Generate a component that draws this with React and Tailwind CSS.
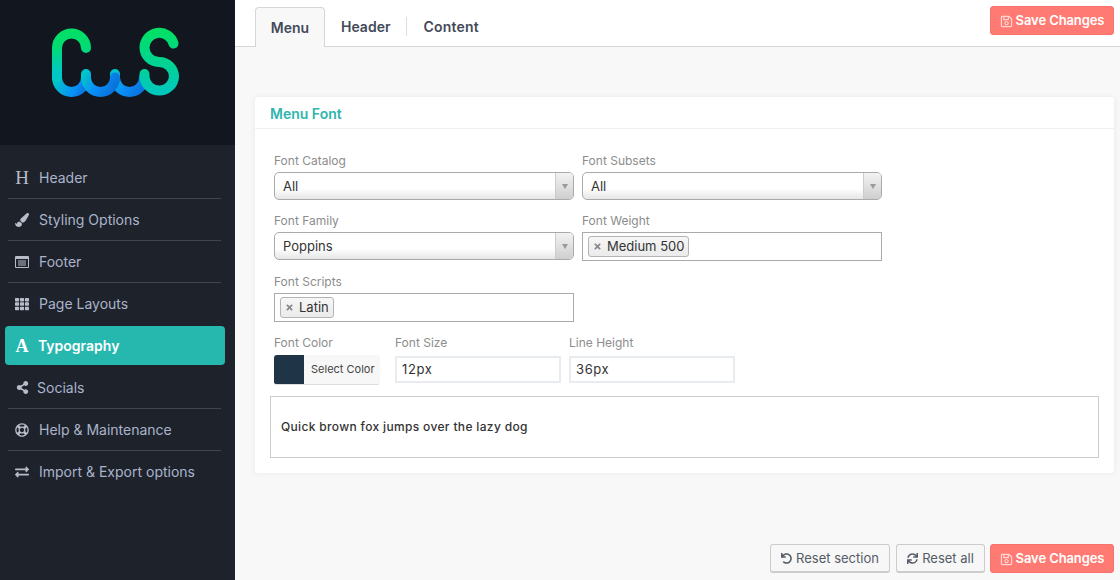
import React from "react";
import { FaPaintBrush, FaTh, FaShareAlt, FaRegLifeRing, FaExchangeAlt, FaRegSave, FaUndo, FaSync, FaTimes } from "react-icons/fa";

const serif = "font-['Liberation_Serif',serif]";

function Logo() {
  return (
    <svg width="150" height="85" viewBox="40 20 150 85" fill="none" strokeWidth="10" strokeLinecap="round">
      <defs>
        <linearGradient id="g1" gradientUnits="userSpaceOnUse" x1="0" y1="32" x2="0" y2="72">
          <stop offset="0" stopColor="#02df67" />
          <stop offset="0.35" stopColor="#02dc70" />
          <stop offset="1" stopColor="#00c8c4" />
        </linearGradient>
        <linearGradient id="g2" gradientUnits="userSpaceOnUse" x1="55" y1="76" x2="84" y2="88">
          <stop offset="0" stopColor="#00c8c4" />
          <stop offset="0.75" stopColor="#0a8ffa" />
          <stop offset="1" stopColor="#0a78e0" />
        </linearGradient>
        <linearGradient id="g3" gradientUnits="userSpaceOnUse" x1="86" y1="72" x2="115" y2="90">
          <stop offset="0" stopColor="#00c4c8" />
          <stop offset="0.45" stopColor="#0a90fa" />
          <stop offset="1" stopColor="#0a70d8" />
        </linearGradient>
        <linearGradient id="g4" gradientUnits="userSpaceOnUse" x1="115" y1="72" x2="144" y2="90">
          <stop offset="0" stopColor="#00c4c8" />
          <stop offset="0.45" stopColor="#0a90fa" />
          <stop offset="1" stopColor="#0a70d8" />
        </linearGradient>
        <linearGradient id="g5" gradientUnits="userSpaceOnUse" x1="0" y1="33" x2="0" y2="92">
          <stop offset="0" stopColor="#02df67" />
          <stop offset="1" stopColor="#00c8bc" />
        </linearGradient>
      </defs>
      <path d="M57 77.500 A14.500 14.500 0 0 0 86 77.500" stroke="url(#g2)" />
      <path d="M86 48 A14.500 14.500 0 0 0 57 48 V77.500" stroke="url(#g1)" />
      <path d="M115 74 V77.500 A14.500 14.500 0 0 0 144 77.500" stroke="url(#g4)" />
      <path d="M86 74 V77.500 A14.500 14.500 0 0 0 115 77.500" stroke="url(#g3)" />
      <path d="M173.500 43.500 A14.800 14.800 0 0 0 144.500 47.500 A14.500 14.500 0 0 0 159 62 A14.800 14.800 0 0 1 174 77 A14.800 14.800 0 0 1 144.500 77 V74" stroke="url(#g5)" />
    </svg>
  );
}

function FooterIcon() {
  return (
    <svg width="14" height="12" viewBox="0 0 14 12">
      <path fillRule="evenodd" fill="currentColor" d="M1 0h12a1 1 0 0 1 1 1v10a1 1 0 0 1-1 1H1a1 1 0 0 1-1-1V1a1 1 0 0 1 1-1zM1 3v8h12V3zM3 4.500h8v1H3zM3 6.500h8v1H3zM3 8.500h8v1H3z" />
    </svg>
  );
}

function NavItem({ icon, label, gap = "ml-[10px]", last }) {
  return (
    <div className={`ml-[8px] w-[213px] h-[42px] flex items-center border-b text-[14px] text-[#aab4cb] ${last ? "border-transparent" : "border-[#45444a]"}`}>
      <span className="w-[14px] ml-[7px] flex justify-center text-[#b6bcc8]">{icon}</span>
      <span className={gap}>{label}</span>
    </div>
  );
}

function Sidebar() {
  return (
    <aside className="w-[235px] shrink-0 bg-[#1e222b] flex flex-col">
      <div className="h-[145px] bg-[#12161e] flex items-start pt-[20px] pl-[40px]">
        <Logo />
      </div>
      <nav className="pt-[12px] flex flex-col">
        <NavItem icon={<span className={`${serif} text-[19px] leading-none`}>H</span>} label="Header" />
        <NavItem icon={<FaPaintBrush size={14} />} label="Styling Options" />
        <NavItem icon={<FooterIcon />} label="Footer" />
        <NavItem icon={<FaTh size={14} />} label="Page Layouts" last />
        <div className="ml-[5px] w-[220px] mt-[1px] mb-[2px] h-[39px] rounded-[4px] bg-[#26b7af] flex items-center text-[14px] font-semibold text-white">
          <span className={`${serif} w-[14px] ml-[10px] flex justify-center text-[18px] leading-none font-bold`}>A</span>
          <span className="ml-[9px]">Typography</span>
        </div>
        <NavItem icon={<FaShareAlt size={13} />} label="Socials" gap="ml-[8px]" />
        <NavItem icon={<FaRegLifeRing size={14} />} label="Help & Maintenance" />
        <NavItem icon={<FaExchangeAlt size={14} />} label="Import & Export options" last />
      </nav>
    </aside>
  );
}

function SaveButton() {
  return (
    <button className="w-[124px] h-[29px] pt-[1px] rounded-[3px] bg-[#ff7a72] border border-[#f9716a] flex items-center justify-center text-[13px] font-semibold tracking-[-0.1px] text-white">
      <FaRegSave size={13} className="mr-[3px] text-[#ffd5d2]" />
      Save Changes
    </button>
  );
}

function Label({ children, className = "" }) {
  return <div className={`text-[12px] leading-[14px] text-[#8d8d8d] ${className}`}>{children}</div>;
}

function Select({ value }) {
  return (
    <div className="mt-[4px] w-[300px] h-[28px] rounded-[5px] border border-[#aaaaaa] bg-[linear-gradient(#ffffff_60%,#e6e6e6)] flex overflow-hidden">
      <div className="flex-1 flex items-center pl-[8px] pt-[1px] text-[13px] text-[#333333]">{value}</div>
      <div className="w-[18px] border-l border-[#cccccc] bg-[linear-gradient(#f2f2f2,#cfcfcf)] flex items-center justify-center">
        <span className="w-0 h-0 border-x-[3.5px] border-x-transparent border-t-[5px] border-t-[#999999]" />
      </div>
    </div>
  );
}

function Multi({ value }) {
  return (
    <div className="mt-[4px] w-[300px] h-[29px] border border-[#aaaaaa] bg-white flex items-center pl-[5px]">
      <span className="h-[21px] rounded-[3px] border border-[#b4b4b4] bg-[linear-gradient(#f6f6f6,#ebebeb)] flex items-center pl-[4px] pr-[4px] text-[13px] text-[#333333]">
        <FaTimes size={9} className="text-[#888888] mr-[5px]" />
        {value}
      </span>
    </div>
  );
}

function Field({ label, children, className = "" }) {
  return (
    <div className={className}>
      <Label>{label}</Label>
      {children}
    </div>
  );
}

function TextBox({ label, value, className = "" }) {
  return (
    <div className={className}>
      <Label>{label}</Label>
      <div className="mt-[6px] w-[166px] h-[27px] border-2 border-[#e8ebef] bg-white flex items-center pl-[5px] text-[13px] tracking-[0.6px] text-[#333333]">
        {value}
      </div>
    </div>
  );
}

function GhostButton({ icon, label, width }) {
  return (
    <button className={`${width} h-[29px] pt-[1px] rounded-[3px] border border-[#cccccc] border-b-2 bg-[#f7f7f7] flex items-center justify-center gap-[4px] text-[13px] text-[#555c66]`}>
      {icon}
      {label}
    </button>
  );
}

export default function App() {
  return (
    <div className="w-[1120px] h-[580px] flex overflow-hidden font-['Inter',sans-serif] bg-[#f8f8f8]">
      <Sidebar />
      <main className="flex-1 flex flex-col">
        <header className="h-[47px] shrink-0 bg-white border-b border-[#d6d6d6] flex items-start pl-[20px] pr-[6px]">
          <div className="mt-[7px] w-[70px] h-[40px] rounded-t-[4px] border border-b-0 border-[#d6d6d6] bg-[#f8f8f8] flex items-center justify-center text-[14px] font-semibold text-[#444a58]">
            Menu
          </div>
          <div className="mt-[7px] h-[39px] flex items-center text-[14px] font-semibold text-[#444a58]">
            <span className="ml-[16px]">Header</span>
            <span className="ml-[16px] w-px h-[19px] bg-[#dddddd]" />
            <span className="ml-[16px] tracking-[0.2px]">Content</span>
          </div>
          <div className="ml-auto mt-[6px]">
            <SaveButton />
          </div>
        </header>

        <div className="pl-[20px] pr-[6px] pt-[50px]">
          <section className="h-[376px] rounded-[3px] bg-white shadow-[0_0_6px_rgba(0,0,0,0.07)] flex flex-col">
            <h2 className="h-[32px] shrink-0 border-b border-[#eef0f2] pl-[15px] pt-[1px] flex items-center text-[14px] font-semibold text-[#2fb5ad]">
              Menu Font
            </h2>
            <div className="pl-[19px] pt-[25px] flex flex-col">
              <div className="flex gap-[8px]">
                <Field label="Font Catalog"><Select value="All" /></Field>
                <Field label="Font Subsets"><Select value="All" /></Field>
              </div>
              <div className="flex gap-[8px] mt-[14px]">
                <Field label="Font Family"><Select value="Poppins" /></Field>
                <Field label="Font Weight"><Multi value="Medium 500" /></Field>
              </div>
              <Field label="Font Scripts" className="mt-[14px]"><Multi value="Latin" /></Field>
              <div className="flex mt-[14px]">
                <div className="w-[121px]">
                  <Label>Font Color</Label>
                  <div className="mt-[5px] w-[106px] h-[30px] rounded-[3px] border-b border-[#dddddd] bg-[#f7f7f7] flex overflow-hidden">
                    <span className="w-[30px] bg-[#1f3547]" />
                    <span className="pl-[7px] flex items-center text-[11px] text-[#444444]">Select Color</span>
                  </div>
                </div>
                <TextBox label="Font Size" value="12px" />
                <TextBox label="Line Height" value="36px" className="ml-[8px]" />
              </div>
            </div>
            <div className="mx-[15px] mt-[11px] h-[62px] border border-[#cccccc] flex items-center pl-[10px] text-[12px] font-medium tracking-[0.34px] text-[#333333]">
              Quick brown fox jumps over the lazy dog
            </div>
          </section>
        </div>

        <footer className="mt-auto mb-[7px] pr-[6px] flex justify-end gap-[6px]">
          <GhostButton icon={<FaUndo size={11} />} label="Reset section" width="w-[120px]" />
          <GhostButton icon={<FaSync size={11} />} label="Reset all" width="w-[89px]" />
          <div className="-ml-[1px]"><SaveButton /></div>
        </footer>
      </main>
    </div>
  );
}
